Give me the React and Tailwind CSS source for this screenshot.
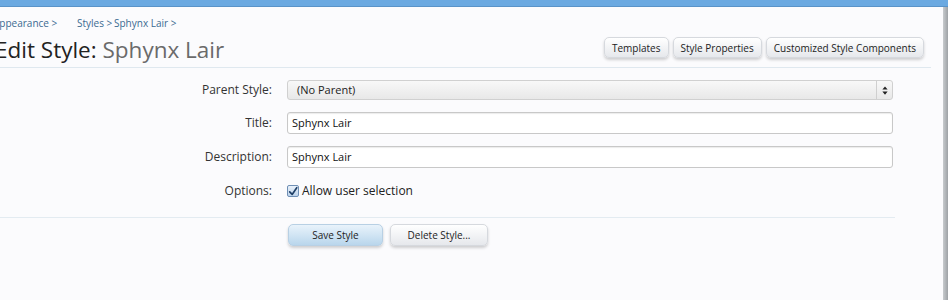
import React from "react";

const btn =
  "h-[21px] px-[7px] rounded-[5px] border border-[#d6d9de] bg-gradient-to-b from-[#ffffff] to-[#e6e8ec] shadow-[0_2px_3px_rgba(0,0,0,0.18)] text-[10px] text-[#222] leading-none flex items-center whitespace-nowrap";

export default function App() {
  return (
    <div className="w-[948px] h-[300px] overflow-hidden bg-[#fbfbfd] flex flex-col font-['Open_Sans',sans-serif]">
      <div className="h-[7px] bg-[#6ba9e1] border-b border-[#5a93c8]" />
      <div className="flex flex-1">
        <div className="flex-1 flex flex-col">
          <div className="pr-[12px]">
            <div className="-ml-[7px] mt-[9px] text-[10px] text-[#3c6a91] flex h-[14px] items-center whitespace-nowrap">
              <span className="w-[84px] shrink-0">Appearance &gt;</span>
              <span className="w-[37px] shrink-0">Styles &gt;</span>
              <span className="shrink-0">Sphynx Lair &gt;</span>
            </div>
            <div className="flex items-center justify-between h-[38px] border-b border-[#dfe8ef]">
              <h1 className="-ml-[5px] mt-[3px] text-[22.5px] leading-none text-[#222] whitespace-nowrap">
                Edit Style: <span className="text-[#6a6a6a]">Sphynx Lair</span>
              </h1>
              <div className="flex gap-[4px] mr-[7px] mb-[2px]">
                <button className={btn}>Templates</button>
                <button className={btn}>Style Properties</button>
                <button className={btn}>Customized Style Components</button>
              </div>
            </div>
          </div>

          <div className="grid grid-cols-[272px_606px] gap-x-[15px] mt-[12px] text-[12px] text-[#333] items-center">
            <label className="text-right">Parent Style:</label>
            <div className="h-[20px] rounded-[3px] border border-[#d0d0d0] bg-gradient-to-b from-[#f8f8f8] to-[#e8e8e8] flex items-center text-[11px] pl-[9px] text-[#222]">
              <span className="flex-1">(No Parent)</span>
              <span className="w-[16px] h-full border-l border-[#cfcfcf] flex items-center justify-center">
                <svg viewBox="0 0 8 12" className="w-[6px] h-[9px]">
                  <path d="M4 0.5 L7.5 4.8 L0.5 4.8 Z M4 11.5 L7.5 7.2 L0.5 7.2 Z" fill="#222" />
                </svg>
              </span>
            </div>

            <label className="text-right mt-[12px]">Title:</label>
            <div className="mt-[12px] h-[22px] rounded-[3px] border border-[#c8c8c8] bg-white flex items-center pl-[4px] text-[11px] text-[#111] shadow-[inset_0_1px_1px_rgba(0,0,0,0.08)]">
              Sphynx Lair
            </div>

            <label className="text-right mt-[12px]">Description:</label>
            <div className="mt-[12px] h-[22px] rounded-[3px] border border-[#c8c8c8] bg-white flex items-center pl-[4px] text-[11px] text-[#111] shadow-[inset_0_1px_1px_rgba(0,0,0,0.08)]">
              Sphynx Lair
            </div>

            <label className="text-right mt-[14px]">Options:</label>
            <div className="mt-[14px] flex items-center gap-[3px] text-[12px] text-[#222]">
              <span className="w-[12px] h-[12px] rounded-[2px] border border-[#6f8fb5] bg-gradient-to-b from-[#eaf2fb] to-[#bcd2ea] flex items-center justify-center">
                <svg viewBox="0 0 12 12" className="w-[11px] h-[11px]">
                  <path d="M2 6.5 L5 9.5 L10.5 1.5" stroke="#1f3f66" strokeWidth="2" fill="none" strokeLinecap="round" strokeLinejoin="round" />
                </svg>
              </span>
              Allow user selection
            </div>
          </div>

          <div className="mt-[17px] mr-[48px] border-t border-[#e3ebf1]" />
          <div className="flex gap-[7px] ml-[288px] mt-[6px]">
            <button className="w-[95px] h-[22px] rounded-[5px] border border-[#b8d0e4] bg-gradient-to-b from-[#e9f3fb] to-[#b9d6ec] shadow-[0_2px_3px_rgba(0,0,0,0.18)] text-[10px] text-[#222]">
              Save Style
            </button>
            <button className="w-[98px] h-[22px] rounded-[5px] border border-[#d6d9de] bg-gradient-to-b from-[#ffffff] to-[#e6e8ec] shadow-[0_2px_3px_rgba(0,0,0,0.18)] text-[10px] text-[#222]">
              Delete Style...
            </button>
          </div>
        </div>
        <div className="w-[5px] bg-gradient-to-r from-[#c8cbce] to-[#9ea2a6]" />
      </div>
    </div>
  );
}
